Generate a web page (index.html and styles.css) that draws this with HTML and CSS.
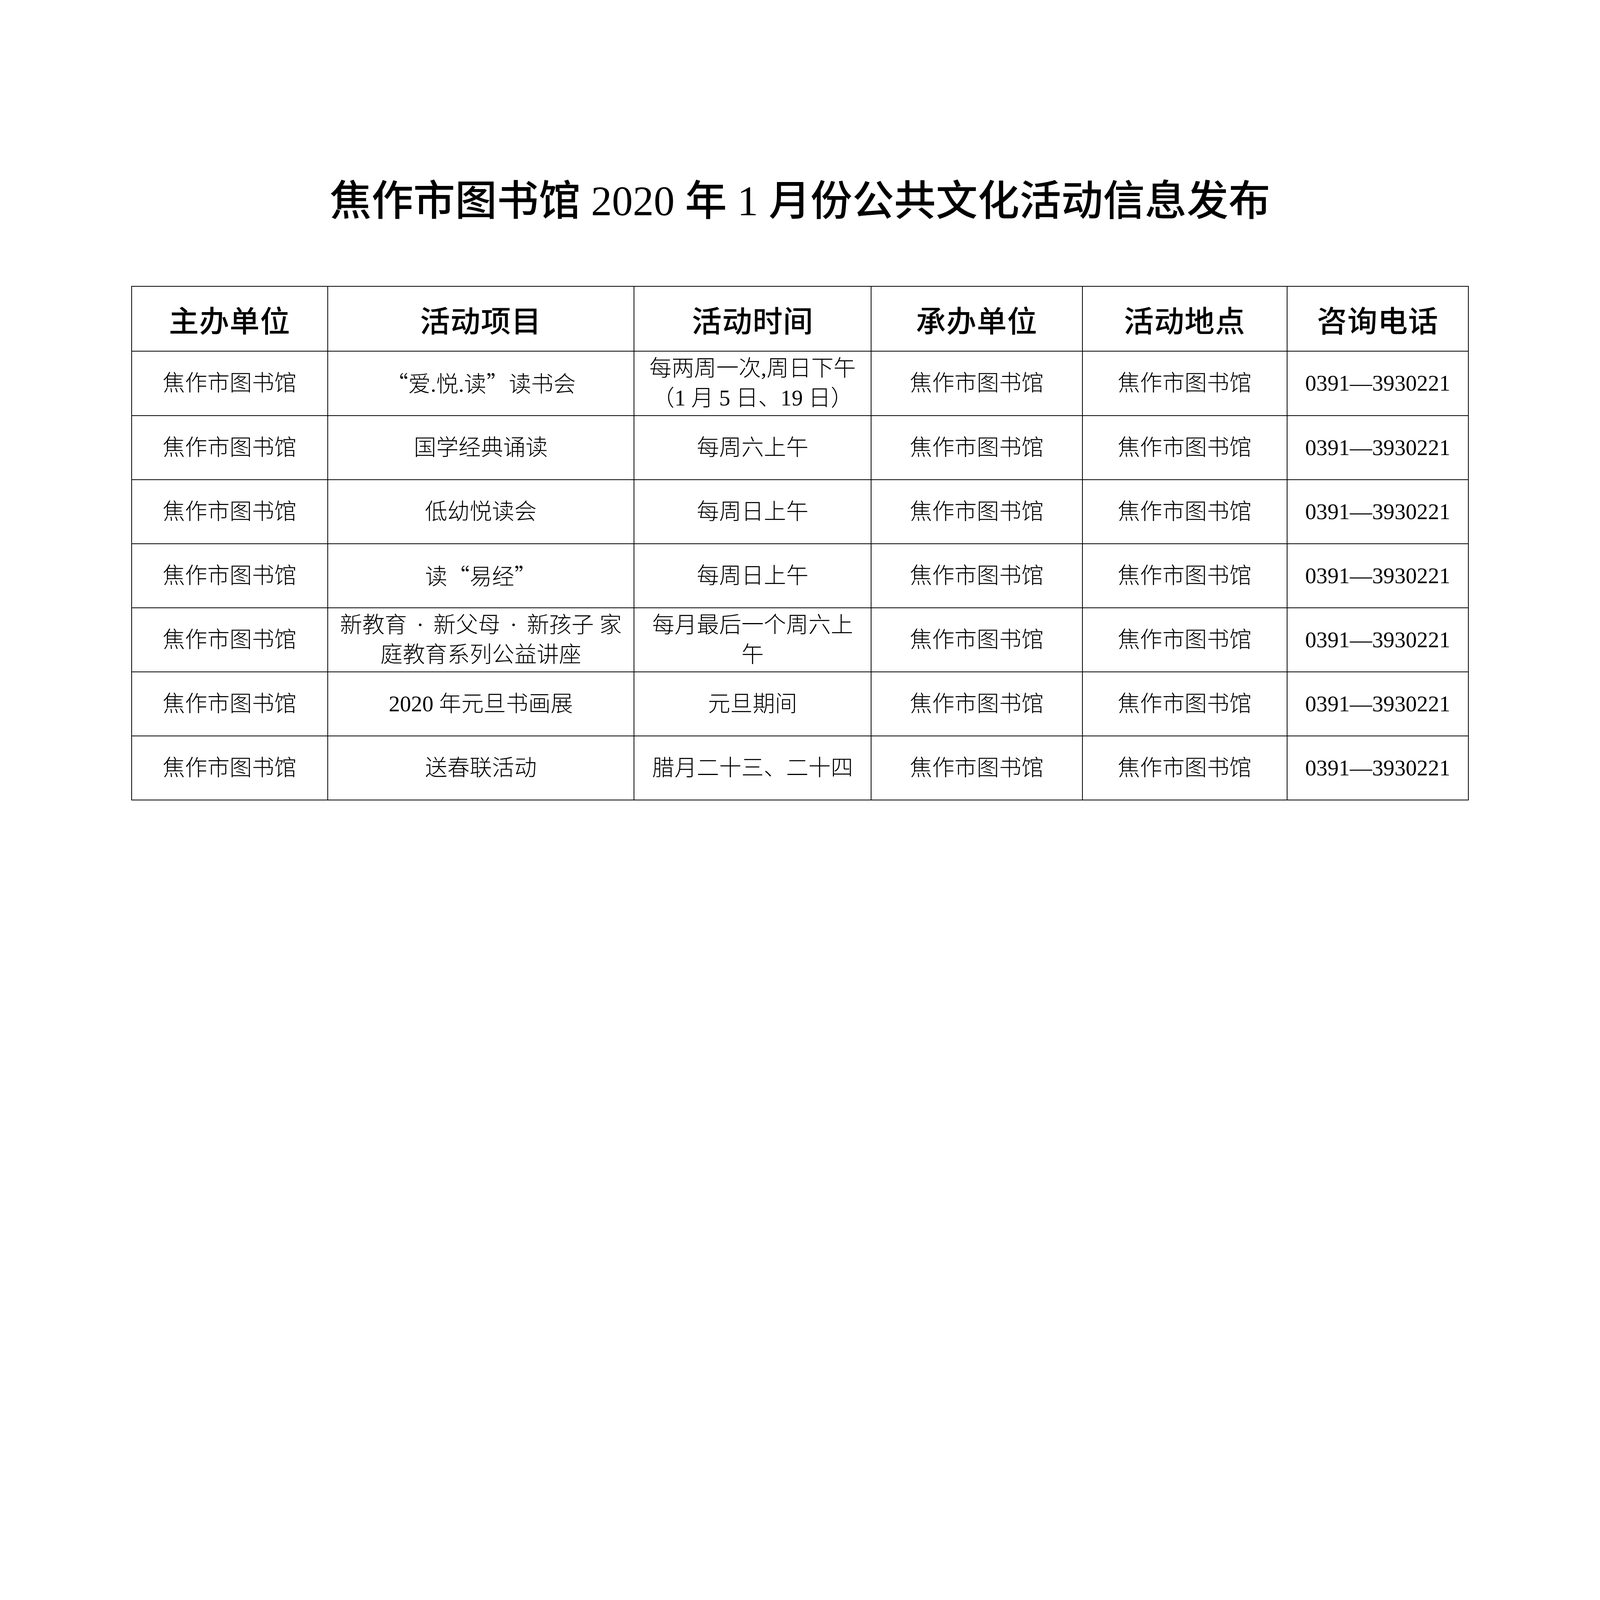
FILE: index.html
```html
<!DOCTYPE html>
<html lang="zh-CN">
<head>
<meta charset="utf-8">
<title>焦作市图书馆2020年1月份公共文化活动信息发布</title>
<link rel="stylesheet" href="styles.css">
</head>
<body>
<h1 class="title">焦作市图书馆 2020 年 1 月份公共文化活动信息发布</h1>
<table class="schedule">
  <colgroup>
    <col class="c-host">
    <col class="c-item">
    <col class="c-time">
    <col class="c-org">
    <col class="c-place">
    <col class="c-tel">
  </colgroup>
  <thead>
    <tr>
      <th>主办单位</th>
      <th>活动项目</th>
      <th>活动时间</th>
      <th>承办单位</th>
      <th>活动地点</th>
      <th>咨询电话</th>
    </tr>
  </thead>
  <tbody>
    <tr>
      <td>焦作市图书馆</td>
      <td><span class="cjk">“</span>爱.悦.读<span class="cjk">”</span>读书会</td>
      <td>每两周一次,周日下午<br>（1 月 5 日、19 日）</td>
      <td>焦作市图书馆</td>
      <td>焦作市图书馆</td>
      <td>0391—3930221</td>
    </tr>
    <tr>
      <td>焦作市图书馆</td>
      <td>国学经典诵读</td>
      <td>每周六上午</td>
      <td>焦作市图书馆</td>
      <td>焦作市图书馆</td>
      <td>0391—3930221</td>
    </tr>
    <tr>
      <td>焦作市图书馆</td>
      <td>低幼悦读会</td>
      <td>每周日上午</td>
      <td>焦作市图书馆</td>
      <td>焦作市图书馆</td>
      <td>0391—3930221</td>
    </tr>
    <tr>
      <td>焦作市图书馆</td>
      <td>读<span class="cjk">“</span>易经<span class="cjk">”</span></td>
      <td>每周日上午</td>
      <td>焦作市图书馆</td>
      <td>焦作市图书馆</td>
      <td>0391—3930221</td>
    </tr>
    <tr>
      <td>焦作市图书馆</td>
      <td>新教育<span class="dot">·</span>新父母<span class="dot">·</span>新孩子 家<br>庭教育系列公益讲座</td>
      <td>每月最后一个周六上<br>午</td>
      <td>焦作市图书馆</td>
      <td>焦作市图书馆</td>
      <td>0391—3930221</td>
    </tr>
    <tr>
      <td>焦作市图书馆</td>
      <td>2020 年元旦书画展</td>
      <td>元旦期间</td>
      <td>焦作市图书馆</td>
      <td>焦作市图书馆</td>
      <td>0391—3930221</td>
    </tr>
    <tr>
      <td>焦作市图书馆</td>
      <td>送春联活动</td>
      <td>腊月二十三、二十四</td>
      <td>焦作市图书馆</td>
      <td>焦作市图书馆</td>
      <td>0391—3930221</td>
    </tr>
  </tbody>
</table>
</body>
</html>
```

FILE: styles.css
```css
/* one unit = one pixel of the 6735px-wide page, so the sheet scales with the window */
:root {
  --u: calc(100vw / 6735);
}

html, body {
  margin: 0;
  padding: 0;
  background: #ffffff;
}

body {
  color: #000000;
  font-family: "Liberation Serif", "Noto Sans CJK SC", serif;
}

.title {
  margin: 0;
  padding-top: calc(744 * var(--u));
  font-family: "Liberation Serif", "Noto Sans CJK SC", sans-serif;
  font-size: calc(176 * var(--u));
  line-height: calc(210 * var(--u));
  font-weight: 500;
  text-align: center;
  white-space: nowrap;
}

.schedule {
  margin: calc(249 * var(--u)) auto 0;
  width: calc(5628 * var(--u));
  border-collapse: collapse;
  table-layout: fixed;
}

.c-host { width: calc(826 * var(--u)); }
.c-item { width: calc(1289 * var(--u)); }
.c-time { width: calc(999 * var(--u)); }
.c-org { width: calc(888 * var(--u)); }
.c-place { width: calc(862 * var(--u)); }
.c-tel { width: calc(764 * var(--u)); }

.schedule th,
.schedule td {
  border: calc(4 * var(--u)) solid #000000;
  padding: 0;
  text-align: center;
  vertical-align: middle;
  white-space: nowrap;
}

.schedule th {
  height: calc(271 * var(--u));
  font-family: "Noto Sans CJK SC", sans-serif;
  font-size: calc(126 * var(--u));
  font-weight: 500;
  letter-spacing: calc(2 * var(--u));
}

.schedule td {
  height: calc(266.6 * var(--u));
  font-size: calc(94 * var(--u));
  line-height: calc(125 * var(--u));
  font-weight: 300;
}

.cjk {
  font-family: "Noto Sans CJK SC", sans-serif;
}

.dot {
  margin: 0 calc(40 * var(--u));
}
```
